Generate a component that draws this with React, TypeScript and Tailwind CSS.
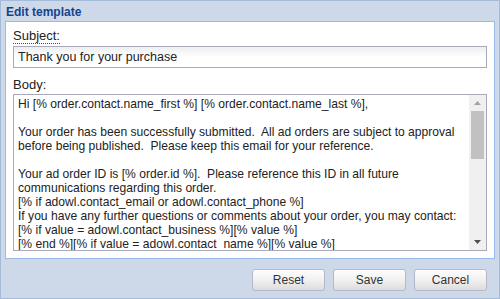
import React from 'react';

const bodyLines = [
  'Hi [% order.contact.name_first %] [% order.contact.name_last %],',
  '',
  'Your order has been successfully submitted.  All ad orders are subject to approval',
  'before being published.  Please keep this email for your reference.',
  '',
  'Your ad order ID is [% order.id %].  Please reference this ID in all future',
  'communications regarding this order.',
  '[% if adowl.contact_email or adowl.contact_phone %]',
  'If you have any further questions or comments about your order, you may contact:',
  '[% if value = adowl.contact_business %][% value %]',
  '[% end %][% if value = adowl.contact_name %][% value %]',
];

const Button: React.FC<{ label: string }> = ({ label }) => (
  <button className="w-[73px] h-[22px] rounded-[3px] border border-[#b5b8c8] bg-gradient-to-b from-[#fdfdfd] via-[#f1f1f1] to-[#dcdcdc] text-[12px] text-[#333] shadow-[inset_0_1px_0_#fff]">
    {label}
  </button>
);

const App: React.FC = () => {
  return (
    <div
      className="w-[500px] h-[299px] bg-[#cdd9e8] border border-[#a3bad9] flex flex-col overflow-hidden"
      style={{ fontFamily: '"Liberation Sans", Arial, sans-serif' }}
    >
      <div className="h-[20px] pt-[1px] flex items-center px-[5px] text-[12px] font-bold text-[#15428b]">Edit template</div>
      <div className="mx-[4px] h-[238px] bg-white border border-[#99bbe8] px-[7px] pt-[6px]">
        <div className="text-[13px] text-[#222] leading-[15px]">
          <span className="border-b border-dotted border-[#b02020]">Subject:</span>
        </div>
        <div className="mt-[3px] h-[22px] border border-[#a9a9b9] bg-gradient-to-b from-[#eceef2] via-white to-white flex items-center px-[4px] text-[12.5px] text-[#222]">
          Thank you for your purchase
        </div>
        <div className="mt-[9px] text-[13px] text-[#222] leading-[15px]">Body:</div>
        <div className="mt-[2px] h-[157px] border border-[#a9a9b9] flex overflow-hidden">
          <div className="flex-1 pl-[4px] pt-[2px] text-[12.1px] leading-[14px] text-[#222] whitespace-pre overflow-hidden">
            {bodyLines.map((l, i) => (
              <div key={i} className="h-[14px]">{l}</div>
            ))}
          </div>
          <div className="w-[17px] bg-[#f0f0f0] flex flex-col items-center">
            <div className="h-[16px] flex items-center justify-center">
              <svg width="7" height="4" viewBox="0 0 7 4"><path d="M0 4 L3.5 0 L7 4 Z" fill="#a3a3a3" /></svg>
            </div>
            <div className="w-[13px] h-[48px] bg-[#c1c1c1]" />
            <div className="flex-1" />
            <div className="h-[16px] flex items-center justify-center">
              <svg width="7" height="4" viewBox="0 0 7 4"><path d="M0 0 L7 0 L3.5 4 Z" fill="#505050" /></svg>
            </div>
          </div>
        </div>
      </div>
      <div className="flex justify-end gap-[8px] pr-[12px] mt-[10px]">
        <Button label="Reset" />
        <Button label="Save" />
        <Button label="Cancel" />
      </div>
    </div>
  );
};

export default App;
